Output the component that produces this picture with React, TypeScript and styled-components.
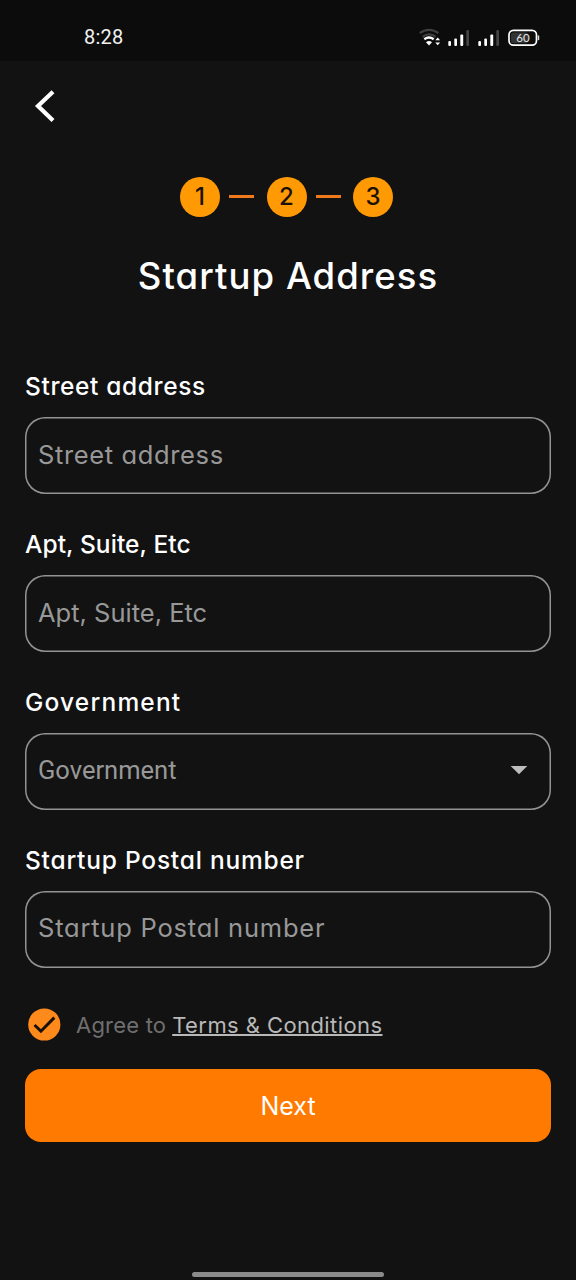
import React from "react";
import styled, { createGlobalStyle } from "styled-components";

const GlobalStyle = createGlobalStyle`
  * { box-sizing: border-box; }
  html, body { margin: 0; background: #121212; }
  body { font-family: Inter, "Open Sans", sans-serif; font-feature-settings: "cv11"; color: #fff; }
`;

const Screen = styled.div`
  display: flex;
  flex-direction: column;
  width: 576px;
  height: 1280px;
  overflow: hidden;
  background: #121212;
`;

const StatusBar = styled.header`
  display: flex;
  align-items: center;
  justify-content: space-between;
  flex: none;
  height: 61px;
  padding: 13px 36px 0 84px;
  background: #0c0c0c;
`;

const Clock = styled.span`
  font: 400 20px/24px Roboto, sans-serif;
  letter-spacing: 0.2px;
  color: #f2f2f2;
`;

const Main = styled.main`
  display: flex;
  flex-direction: column;
  flex: 1;
  padding: 0 25px;
`;

const BackButton = styled.button`
  display: flex;
  align-self: flex-start;
  margin: 25px 0 0 5px;
  padding: 0;
  border: 0;
  background: none;
`;

const Steps = styled.div`
  display: flex;
  align-items: center;
  gap: 9px;
  height: 40px;
  margin: 50.5px 0 0 155px;
`;

const StepDot = styled.span`
  width: 40px;
  height: 40px;
  border-radius: 50%;
  background: #ff9a05;
  color: #1b1205;
  font-size: 24px;
  font-weight: 500;
  line-height: 40px;
  text-align: center;
`;

const StepLine = styled.span`
  width: 25px;
  height: 2.5px;
  margin-right: 3.5px;
  background: #ee7a1c;
`;

const Spaced = styled.span<{ $ls?: number }>`
  letter-spacing: ${(p) => p.$ls ?? 0}px;
  white-space: nowrap;
`;

const Title = styled.h1`
  margin: 34px 0 0;
  height: 50px;
  font-size: 36.5px;
  font-weight: 500;
  line-height: 50px;
  text-align: center;
`;

const Form = styled.form`
  display: flex;
  flex-direction: column;
  gap: 31.9px;
  margin-top: 67.5px;
`;

const Field = styled.label`
  display: flex;
  flex-direction: column;
  gap: 12.5px;
`;

const Label = styled.span`
  font-size: 24.5px;
  font-weight: 500;
  line-height: 36.5px;
`;

const Box = styled.span<{ $roboto?: boolean }>`
  display: flex;
  align-items: center;
  justify-content: space-between;
  height: 77px;
  padding: 0 22px 2.6px 13px;
  border-radius: 20px;
  box-shadow: inset 0 0 0 1.5px #939393;
  color: #989898;
  font-family: ${(p) => (p.$roboto ? "Roboto, sans-serif" : "inherit")};
  font-size: 25.5px;
`;

const Agree = styled.div`
  display: flex;
  align-items: center;
  height: 34px;
  margin: 40px 0 0 3px;
  color: #6f6f6f;
  font-size: 22px;
`;

const AgreeText = styled.span`
  display: flex;
  margin-left: 15px;
`;

const Terms = styled.a`
  display: block;
  margin-left: 6px;
  color: #b8b8b8;
  text-decoration: underline;
  text-decoration-thickness: 1.5px;
  text-underline-offset: 1px;
  text-decoration-skip-ink: none;
`;

const NextButton = styled.button`
  flex: none;
  height: 72.5px;
  margin-top: 27.5px;
  padding: 2px 0 0;
  border: 0;
  border-radius: 16px;
  background: #ff7a00;
  color: #fff;
  font: inherit;
  font-size: 25px;
`;

const HomeBar = styled.div`
  flex: none;
  align-self: center;
  width: 192px;
  height: 5px;
  margin-bottom: 3px;
  border-radius: 3px;
  background: #8b8b8b;
`;

const StatusIcons = () => (
  <svg width="121" height="24" viewBox="0 0 121 24" fill="none">
    <g strokeWidth="2.2">
      <path d="M0.8 8.2a14.5 14.5 0 0 1 18.6 0" stroke="#3f3f3f" />
      <path d="M3.6 11.8a10.2 10.2 0 0 1 13 0" stroke="#3f3f3f" />
      <path d="M5.3 14.3a8 8 0 0 1 9.4 0" stroke="#fff" strokeWidth="2.4" />
    </g>
    <path d="M10 20.4l-3-3.2a4.6 4.6 0 0 1 6 0z" fill="#fff" />
    <path d="M16.3 15.3l2.4-2.8 2.4 2.8zM16.3 17.4l2.4 2.8 2.4-2.8z" fill="#fff" />
    {[29.3, 59.3].map((x) => (
      <g key={x}>
        <rect x={x} y="16" width="2.7" height="5" rx="1" fill="#fff" />
        <rect x={x + 6} y="13.5" width="2.7" height="7.5" rx="1" fill="#fff" />
        <rect x={x + 12} y="9.5" width="2.9" height="11.5" rx="1" fill="#fff" />
        <rect x={x + 18} y="5" width="2.7" height="16" rx="1" fill="#444" />
      </g>
    ))}
    <rect x="90" y="5.4" width="27.5" height="14.8" rx="4.4" stroke="#fff" strokeWidth="1.7" />
    <rect x="92" y="7.4" width="17" height="10.8" rx="2.5" fill="#333" />
    <path d="M119.5 10.5v4.6" stroke="#ddd" strokeWidth="1.4" />
    <text x="104" y="16.9" textAnchor="middle" fill="#e8e8e8" fontFamily="Lato, sans-serif" fontSize="11.5">60</text>
  </svg>
);

const fields = [
  { name: "Street address", ls: 0.63, pls: 0.63 },
  { name: "Apt, Suite, Etc", ls: 0.08, pls: 0 },
  { name: "Government", ls: 1.2, pls: 0, select: true },
  { name: "Startup Postal number", ls: 0.78, pls: 0.79 },
];

export default function App() {
  return (
    <Screen>
      <GlobalStyle />
      <StatusBar>
        <Clock>8:28</Clock>
        <StatusIcons />
      </StatusBar>
      <Main>
        <BackButton type="button" aria-label="Back">
          <svg width="30" height="40" viewBox="0 0 30 40" fill="none">
            <path d="M23 5.8L8 20l15 14.4" stroke="#fff" strokeWidth="4.2" />
          </svg>
        </BackButton>
        <Steps>
          <StepDot>1</StepDot>
          <StepLine />
          <StepDot>2</StepDot>
          <StepLine />
          <StepDot>3</StepDot>
        </Steps>
        <Title><Spaced $ls={1.05}>Startup Address</Spaced></Title>
        <Form>
          {fields.map((f) => (
            <Field key={f.name}>
              <Label><Spaced $ls={f.ls}>{f.name}</Spaced></Label>
              <Box $roboto={f.select}>
                <Spaced $ls={f.pls}>{f.name}</Spaced>
                {f.select && (
                  <svg width="20" height="10" viewBox="0 0 20 10">
                    <path d="M1.7 1h16.6L10 9.3z" fill="#bdbdbd" />
                  </svg>
                )}
              </Box>
            </Field>
          ))}
        </Form>
        <Agree>
          <svg width="33" height="33" viewBox="0 0 33 33" fill="none">
            <circle cx="16.3" cy="16.5" r="16.1" fill="#ff8a1c" />
            <path d="M6.5 17l6.4 6.2L26.3 9.6" stroke="#1a1208" strokeWidth="3" />
          </svg>
          <AgreeText>
            <Spaced $ls={0.2}>Agree to</Spaced>
            <Terms><Spaced $ls={0.42}>Terms &amp; Conditions</Spaced></Terms>
          </AgreeText>
        </Agree>
        <NextButton type="button"><Spaced>Next</Spaced></NextButton>
      </Main>
      <HomeBar />
    </Screen>
  );
}
